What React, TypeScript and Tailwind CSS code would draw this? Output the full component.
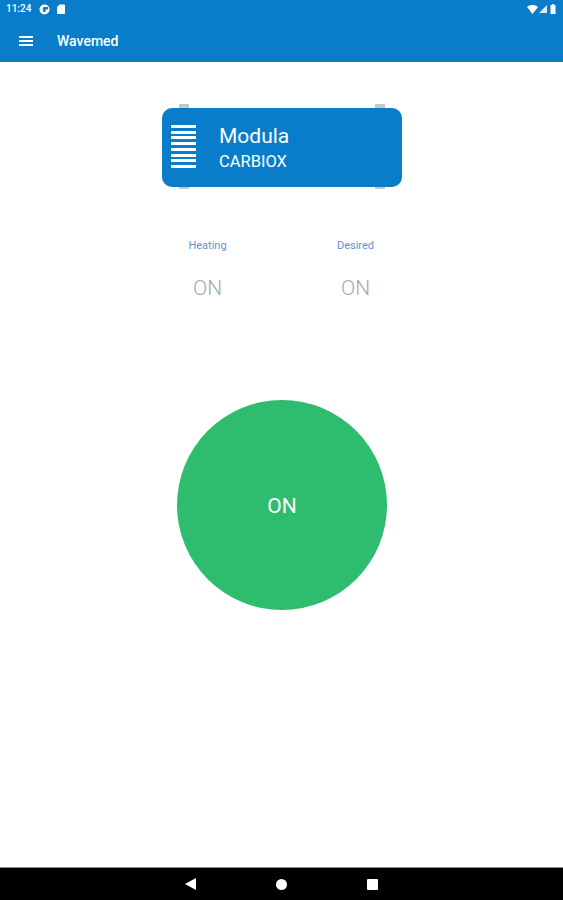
import { useState } from "react";

const font = { fontFamily: "Roboto, sans-serif" };

function StatusBar() {
  return (
    <div className="h-[18px] flex items-center justify-between pl-[6px] pr-[7px] text-white">
      <div className="flex items-center">
        <span className="text-[10px] font-medium leading-none w-[26px]">11:24</span>
        <svg width="11" height="11" viewBox="0 0 11 11" className="ml-[7px]">
          <circle cx="5.5" cy="5.5" r="5" fill="white" />
          <path d="M5.5 5.5H9V3H4.5C3.5 4 3.5 6 4.5 8H6.5V5.5Z" fill="#0a7dca" />
        </svg>
        <svg width="8" height="10" viewBox="0 0 8 10" className="ml-[7px]">
          <path d="M2.5 0.5H7a1 1 0 0 1 1 1V9a1 1 0 0 1-1 1H1a1 1 0 0 1-1-1V3Z" fill="white" />
        </svg>
      </div>
      <div className="flex items-center gap-[1px]">
        <svg width="11" height="9" viewBox="0 0 11 9">
          <path d="M0 2C3 -0.6 8 -0.6 11 2L5.5 9Z" fill="white" />
        </svg>
        <svg width="8" height="8" viewBox="0 0 8 8">
          <path d="M8 0V8H0Z" fill="white" opacity="0.85" />
        </svg>
        <svg width="6" height="10" viewBox="0 0 6 10" className="ml-[2px]">
          <path d="M2 0H4V1H5.5V10H0.5V1H2Z" fill="white" />
        </svg>
      </div>
    </div>
  );
}

function Device() {
  const [lines] = useState(Array.from({ length: 8 }));
  return (
    <div className="relative w-[240px] h-[79px] bg-[#0a7dca] rounded-[10px] flex items-center text-white">
      <div className="absolute -top-[4px] left-[17px] w-[10px] h-[4px] bg-[#c4c8cc] rounded-t-[1px]" />
      <div className="absolute -top-[4px] right-[17px] w-[10px] h-[4px] bg-[#c4c8cc] rounded-t-[1px]" />
      <div className="absolute -bottom-[2px] left-[17px] w-[10px] h-[2px] bg-[#c4c8cc]" />
      <div className="absolute -bottom-[2px] right-[17px] w-[10px] h-[2px] bg-[#c4c8cc]" />
      <div className="ml-[9px] mb-[2px] w-[25px] flex flex-col gap-[2.7px]">
        {lines.map((_, i) => (
          <div key={i} className="h-[3px] bg-white" />
        ))}
      </div>
      <div className="ml-[23px] flex flex-col">
        <span className="text-[21px] leading-[26px] mt-[-1px]">Modula</span>
        <span className="text-[16.5px] leading-[20px] mt-[3px]">CARBIOX</span>
      </div>
    </div>
  );
}

function Reading({ label }: { label: string }) {
  return (
    <div className="w-[100px] flex flex-col items-center">
      <span className="text-[11px] leading-[14px] text-[#5c93cf]">{label}</span>
      <span className="text-[21px] leading-[24px] font-light text-[#a8a8a8] mt-[23px]">ON</span>
    </div>
  );
}

export default function App() {
  return (
    <div className="w-[563px] h-[900px] flex flex-col bg-white" style={font}>
      <div className="h-[62px] bg-[#0a7dca] shrink-0">
        <StatusBar />
        <div className="h-[44px] flex items-center pl-[19px] pt-[2px] text-white">
          <div className="w-[14px] flex flex-col gap-[2px]">
            <div className="h-[2px] bg-white" />
            <div className="h-[2px] bg-white" />
            <div className="h-[2px] bg-white" />
          </div>
          <span className="ml-[24px] text-[14px] font-medium">Wavemed</span>
        </div>
      </div>

      <div className="flex-1 flex flex-col items-center">
        <div className="mt-[46px] ml-[1px]">
          <Device />
        </div>
        <div className="mt-[52px] flex gap-[48px]">
          <Reading label="Heating" />
          <Reading label="Desired" />
        </div>
        <button className="mt-[100px] ml-[1px] pt-[3px] w-[210px] h-[210px] rounded-full bg-[#2ebd6e] text-white text-[21px] flex items-center justify-center">
          ON
        </button>
      </div>

      <div className="h-[33px] bg-black shrink-0 flex items-center justify-center gap-[80px] border-t border-[#8a8a8a]">
        <svg width="11" height="12" viewBox="0 0 11 12">
          <path d="M11 0V12L0 6Z" fill="white" />
        </svg>
        <div className="w-[11px] h-[11px] rounded-full bg-white" />
        <div className="w-[11px] h-[11px] rounded-[1px] bg-white" />
      </div>
    </div>
  );
}
